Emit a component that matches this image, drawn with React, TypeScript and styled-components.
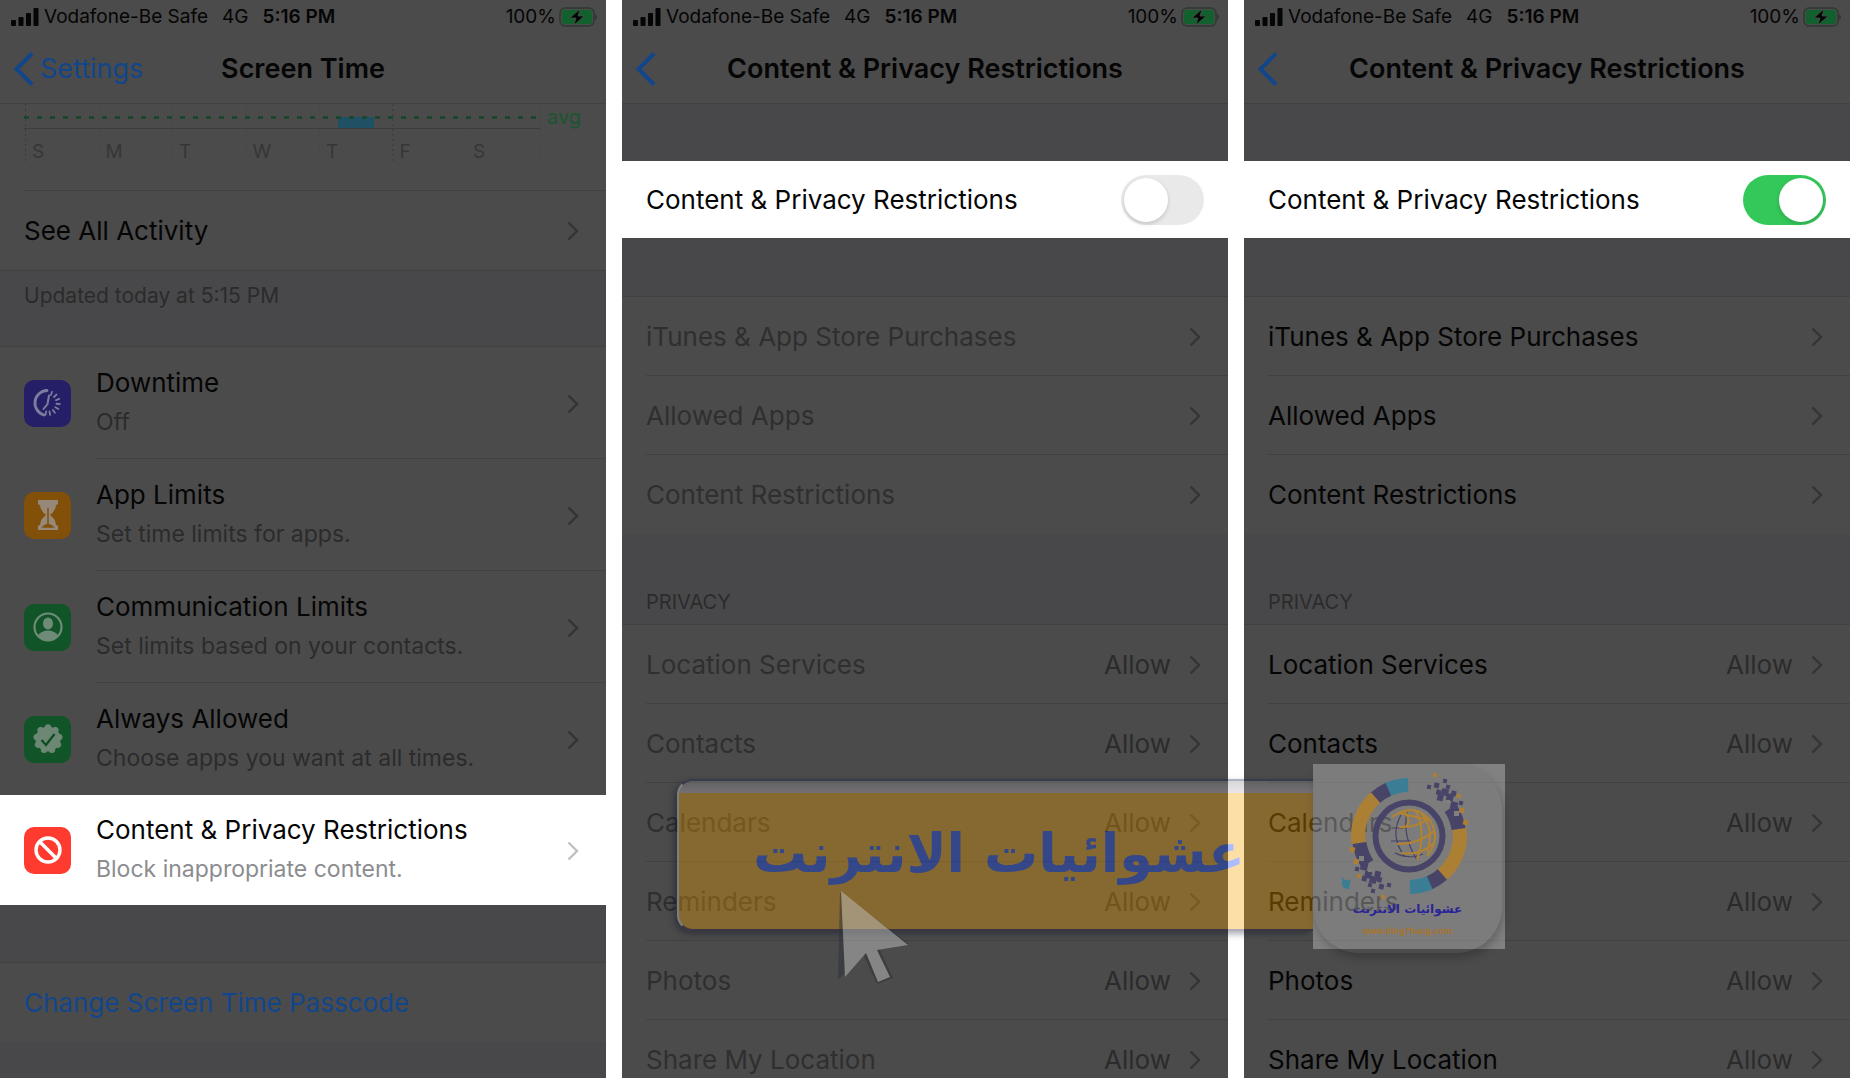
import React from "react";
import styled, { createGlobalStyle } from "styled-components";

const c = {
  sheet: "#4b4b4b",
  group: "#48484a",
  line: "#414142",
  ink: "#050505",
  muted: "#2b2b2c",
  chevron: "#343435",
  link: "#11468c",
};

const GlobalStyle = createGlobalStyle`
  *, *::before, *::after { box-sizing: border-box; }
  body {
    margin: 0;
    background: #fff;
    font-family: Inter, "Liberation Sans", sans-serif;
    color: ${c.ink};
  }
  a { color: inherit; text-decoration: none; }
  h1, h2, p { margin: 0; font-weight: 400; }
  svg { display: block; flex-shrink: 0; }
`;

const Stage = styled.main`
  position: relative;
  display: flex;
  gap: 16px;
  height: 100vh;
  overflow: hidden;
`;

const Phone = styled.section`
  flex: 1;
  min-width: 0;
  display: flex;
  flex-direction: column;
  background: ${c.group};
  & > * { flex-shrink: 0; }
`;

const Status = styled.div`
  display: flex;
  align-items: center;
  height: 34px;
  padding: 0 9px 0 11px;
  background: ${c.sheet};
  font-size: 19px;
  line-height: 24px;
  white-space: nowrap;
`;

const Carrier = styled.span`
  margin: 0 14px 0 5px;
`;

const Clock = styled.span`
  margin-left: 14px;
  font-weight: 600;
`;

const Charge = styled.span`
  margin-left: auto;
  margin-right: 3px;
`;

const Nav = styled.header`
  display: grid;
  grid-template-columns: 1fr auto 1fr;
  align-items: center;
  height: 70px;
  padding: 0 12px;
  background: ${c.sheet};
  border-bottom: 1px solid ${c.line};
  font-size: 27px;
  line-height: 32px;
`;

const Back = styled.button`
  justify-self: start;
  display: flex;
  align-items: center;
  gap: 6px;
  padding: 0;
  border: 0;
  background: none;
  color: ${c.link};
  font: inherit;
`;

const Title = styled.h1`
  font-size: 27px;
  font-weight: 600;
  white-space: nowrap;
`;

const ChartBox = styled.div`
  height: 87px;
  padding-left: 24px;
  background: ${c.sheet};
`;

const Rule = styled.div`
  border-top: 1px solid ${c.line};
`;

const Spacer = styled.div<{ $h: number }>`
  height: ${(p) => p.$h}px;
`;

const Note = styled.p`
  height: 76px;
  padding: 13px 24px;
  border-top: 1px solid ${c.line};
  color: ${c.muted};
  font-size: 21px;
  line-height: 24px;
`;

const GroupLabel = styled.h2`
  display: flex;
  align-items: flex-end;
  height: 90px;
  padding: 0 24px 9px;
  color: ${c.muted};
  font-size: 20px;
  line-height: 26px;
`;

const Group = styled.div`
  background: ${c.sheet};
  border-top: 1px solid ${c.line};
`;

const Row = styled.a<{ $plain?: boolean }>`
  display: flex;
  align-items: center;
  height: 79px;
  padding-left: 24px;
  background: ${c.sheet};
  font-size: 26px;
  line-height: 32px;
`;

const ToolRow = styled(Row)<{ $lit?: boolean }>`
  gap: 25px;
  height: ${(p) => (p.$lit ? 110 : 112)}px;
  background: ${(p) => (p.$lit ? "#fff" : c.sheet)};
`;

const RowBody = styled.span<{ $rule?: boolean }>`
  flex: 1;
  align-self: stretch;
  display: flex;
  align-items: center;
  padding: 2px 27px 0 0;
  border-bottom: 1px solid ${(p) => (p.$rule ? c.line : "transparent")};
`;

const Label = styled.span<{ $dim?: boolean; $blue?: boolean }>`
  flex: 1;
  color: ${(p) => (p.$blue ? c.link : p.$dim ? "#2f2f30" : "inherit")};
`;

const Sub = styled.span<{ $lit?: boolean }>`
  display: block;
  padding: 8px 0 4px;
  color: ${(p) => (p.$lit ? "#8c8c90" : c.muted)};
  font-size: 23px;
  line-height: 30px;
`;

const Value = styled.span`
  margin-right: 18px;
  color: ${c.muted};
`;

const Tile = styled.span<{ $bg: string }>`
  display: grid;
  place-items: center;
  width: 47px;
  height: 47px;
  border-radius: 10px;
  background: ${(p) => p.$bg};
`;

const SwitchRow = styled.label`
  display: flex;
  align-items: center;
  justify-content: space-between;
  height: 77px;
  padding: 0 24px;
  background: #fff;
  font-size: 26px;
  line-height: 32px;
`;

const Switch = styled.input`
  appearance: none;
  display: flex;
  align-items: center;
  width: 83px;
  height: 50px;
  margin: 0;
  padding: 0 3px;
  border-radius: 25px;
  background: #e9e9ea;
  &::before {
    content: "";
    width: 44px;
    height: 44px;
    border-radius: 50%;
    background: #fff;
    box-shadow: 0 2px 4px rgba(0, 0, 0, 0.16);
  }
  &:checked { background: #34c759; }
  &:checked::before { margin-left: auto; }
`;

/* Watermark laid over the three phones */
const Ribbon = styled.div`
  position: absolute;
  left: 677px;
  top: 779px;
  width: 636px;
  height: 152px;
  padding-top: 13px;
  border-top: 2px solid #0c2050;
  border-left: 2px solid #dce6f0;
  border-bottom: 2px solid #201030;
  border-radius: 16px 0 0 16px;
  background: linear-gradient(#8a8a90, #c8b8c0 12px, #f9a100 12px);
  box-shadow: -3px 3px 6px #000820;
  opacity: 0.34;
`;

const RibbonText = styled.p`
  padding-right: 68px;
  color: #0a40ff;
  font-family: "DejaVu Sans", sans-serif;
  font-size: 54px;
  font-weight: 700;
  line-height: 120px;
  text-align: right;
  direction: ltr;
  white-space: nowrap;
`;

const Pointer = styled.svg`
  position: absolute;
  left: 832px;
  top: 886px;
  opacity: 0.48;
`;

const Badge = styled.div`
  position: absolute;
  left: 1313px;
  top: 764px;
  width: 192px;
  height: 185px;
  background: rgba(205, 205, 205, 0.42);
`;

const BadgeCard = styled.div`
  display: flex;
  flex-direction: column;
  align-items: center;
  width: 189px;
  height: 189px;
  border-radius: 8px 46px 46px 46px;
  background: rgba(90, 90, 90, 0.1);
  box-shadow: 2px 5px 9px rgba(0, 0, 0, 0.22);
`;

const BadgeName = styled.p`
  color: #2a2596;
  font-family: "DejaVu Sans", sans-serif;
  font-size: 12px;
  font-weight: 700;
  line-height: 18px;
`;

const BadgeUrl = styled.p`
  color: #a8742a;
  font-family: "Liberation Sans Narrow", "Liberation Sans", sans-serif;
  font-size: 9px;
  font-weight: 700;
  line-height: 26px;
`;

const Chevron = ({ lit = false }: { lit?: boolean }) => (
  <svg width="12" height="20" viewBox="0 0 12 20" fill="none" aria-hidden="true">
    <path d="M1.5 1.5 10 10l-8.500 8.500" stroke={lit ? "#c0c0c3" : c.chevron} strokeWidth="2.400" />
  </svg>
);

const StatusBar = () => (
  <Status>
    <svg width="28" height="18" viewBox="0 0 28 18" fill={c.ink} aria-hidden="true">
      <rect y="12" width="5" height="6" rx="1" />
      <rect x="7.500" y="9" width="5" height="9" rx="1" />
      <rect x="15" y="5" width="5" height="13" rx="1" />
      <rect x="22.500" width="5" height="18" rx="1" />
    </svg>
    <Carrier>Vodafone-Be Safe</Carrier>
    <span>4G</span>
    <Clock>5:16 PM</Clock>
    <Charge>100%</Charge>
    <svg width="38" height="20" viewBox="0 0 38 20" aria-hidden="true">
      <rect x="1" y="1" width="34" height="18" rx="5" fill="none" stroke="#2d3a31" strokeWidth="1.500" />
      <rect x="3" y="3" width="30" height="14" rx="3" fill="#12602d" />
      <path d="M36 7v6q2-1 2-3t-2-3z" fill="#2d3a31" />
      <path d="M21 2 11 11h6l-2 7 10-9h-6z" fill="#020202" stroke="#4b4b4b" strokeWidth=".8" />
    </svg>
  </Status>
);

const NavBar = ({ title, back }: { title: string; back?: string }) => (
  <Nav>
    <Back aria-label={back ?? "Back"}>
      <svg width="22" height="36" viewBox="0 0 22 36" fill="none" aria-hidden="true">
        <path d="M20 2.500 4.500 18 20 33.500" stroke={c.link} strokeWidth="4" />
      </svg>
      {back}
    </Back>
    <Title>{title}</Title>
  </Nav>
);

const days = ["S", "M", "T", "W", "T", "F", "S"];

const WeekChart = () => (
  <ChartBox>
    <svg width="570" height="86" viewBox="0 0 570 86" aria-hidden="true">
      {[0, 1, 2, 3, 4, 5, 6, 7].map((i) => (
        <path
          key={i}
          d={`M${1.5 + i * 73.500} 0V60`}
          stroke={i === 0 || i === 5 ? "#3b3b3c" : "#464647"}
          strokeDasharray="2 3"
        />
      ))}
      <path d="M0 24.500H516" stroke="#3c3c3d" />
      <rect x="314" y="13" width="36" height="11" fill="#1f5063" />
      <path d="M0 13.500H512" stroke="#14472a" strokeWidth="2.500" strokeDasharray="5 8" />
      {days.map((d, i) => (
        <text key={i} x={8 + i * 73.500} y="54" fontSize="19" fill="#363637">
          {d}
        </text>
      ))}
      <text x="523" y="20" fontSize="20" fill="#1a552f">
        avg
      </text>
    </svg>
    <Rule />
  </ChartBox>
);

const DowntimeIcon = () => (
  <svg width="32" height="32" viewBox="0 0 32 32" fill="none" stroke="#7d7da0" strokeLinecap="round">
    <path d="M15 3.500A12.500 12.500 0 0 0 12 28" strokeWidth="2.800" />
    <path d="M17 8.500 15.500 17l-4 5" strokeWidth="2" />
    {[-70, -45, -20, 5, 30, 55, 80, 102].map((a) => (
      <path key={a} d="M24.500 16h3.500" strokeWidth="1.800" transform={`rotate(${a} 16 16)`} />
    ))}
  </svg>
);

const HourglassIcon = () => (
  <svg width="24" height="34" viewBox="0 0 24 34">
    <path
      d="M2 2h20v4q-1 1-2 1-.500 6-6 10 5.500 4 6 10 1 0 2 1v4H2v-4q1-1 2-1 .500-6 6-10-5.500-4-6-10-1 0-2-1z"
      fill="#96897a"
    />
    <path d="M12 10v16M7 29q5-5 10 0z" stroke="#825008" strokeWidth="1.500" fill="#825008" />
  </svg>
);

const PersonIcon = () => (
  <svg width="32" height="32" viewBox="0 0 32 32">
    <circle cx="16" cy="16" r="13.500" fill="none" stroke="#6f8b77" strokeWidth="2.200" />
    <ellipse cx="16" cy="12.500" rx="5" ry="6" fill="#6f8b77" />
    <path d="M6 24q4-4.500 10-4.500T26 24q-4 5.500-10 5.500T6 24z" fill="#6f8b77" />
  </svg>
);

const SealIcon = () => (
  <svg width="32" height="32" viewBox="0 0 32 32">
    <g fill="#6c8773">
      <circle cx="16" cy="16" r="12.500" />
      {[0, 40, 80, 120, 160, 200, 240, 280, 320].map((a) => (
        <circle key={a} cx="16" cy="4.500" r="3.200" transform={`rotate(${a} 16 16)`} />
      ))}
    </g>
    <path d="m9.500 17 4.500 5 8.500-11" fill="none" stroke="#0d4d20" strokeWidth="2.200" />
  </svg>
);

const BlockIcon = () => (
  <svg width="32" height="32" viewBox="0 0 32 32" fill="none" stroke="#fff" strokeWidth="3.400">
    <circle cx="16" cy="16" r="12" />
    <path d="m7.500 7.500 17 17" />
  </svg>
);

const tools = [
  { name: "Downtime", sub: "Off", bg: "#241f66", icon: <DowntimeIcon /> },
  { name: "App Limits", sub: "Set time limits for apps.", bg: "#825008", icon: <HourglassIcon /> },
  { name: "Communication Limits", sub: "Set limits based on your contacts.", bg: "#105427", icon: <PersonIcon /> },
  { name: "Always Allowed", sub: "Choose apps you want at all times.", bg: "#105427", icon: <SealIcon /> },
  { name: "Content & Privacy Restrictions", sub: "Block inappropriate content.", bg: "#ff3b30", icon: <BlockIcon />, lit: true },
];

const ScreenTime = () => (
  <Phone>
    <StatusBar />
    <NavBar title="Screen Time" back="Settings" />
    <WeekChart />
    <Row href="#activity">
      <RowBody>
        <Label>See All Activity</Label>
        <Chevron />
      </RowBody>
    </Row>
    <Note>Updated today at 5:15 PM</Note>
    <Group>
      {tools.map((t, i) => (
        <ToolRow key={t.name} href={`#tool-${i}`} $lit={t.lit}>
          <Tile $bg={t.bg}>{t.icon}</Tile>
          <RowBody $rule={i < 3}>
            <Label>
              {t.name}
              <Sub $lit={t.lit}>{t.sub}</Sub>
            </Label>
            <Chevron lit={t.lit} />
          </RowBody>
        </ToolRow>
      ))}
    </Group>
    <Spacer $h={57} />
    <Group>
      <Row href="#passcode">
        <RowBody>
          <Label $blue>Change Screen Time Passcode</Label>
        </RowBody>
      </Row>
    </Group>
  </Phone>
);

const content = ["iTunes & App Store Purchases", "Allowed Apps", "Content Restrictions"];
const privacy = ["Location Services", "Contacts", "Calendars", "Reminders", "Photos", "Share My Location"];

const Restrictions = ({ on }: { on: boolean }) => (
  <Phone>
    <StatusBar />
    <NavBar title="Content & Privacy Restrictions" />
    <Spacer $h={57} />
    <SwitchRow>
      Content &amp; Privacy Restrictions
      <Switch type="checkbox" role="switch" defaultChecked={on} />
    </SwitchRow>
    <Spacer $h={58} />
    <Group>
      {content.map((name, i) => (
        <Row key={name} href={`#content-${i}`}>
          <RowBody $rule={i < 2}>
            <Label $dim={!on}>{name}</Label>
            <Chevron />
          </RowBody>
        </Row>
      ))}
    </Group>
    <GroupLabel>PRIVACY</GroupLabel>
    <Group>
      {privacy.map((name, i) => (
        <Row key={name} href={`#privacy-${i}`}>
          <RowBody $rule>
            <Label $dim={!on}>{name}</Label>
            <Value>Allow</Value>
            <Chevron />
          </RowBody>
        </Row>
      ))}
    </Group>
  </Phone>
);

const arc = (from: number, to: number, r: number) => {
  const at = (deg: number) => {
    const a = (deg * Math.PI) / 180;
    return `${(r * Math.cos(a)).toFixed(2)} ${(r * Math.sin(a)).toFixed(2)}`;
  };
  return `M${at(from)}A${r} ${r} 0 0 1 ${at(to)}`;
};

/* x, y, size, gold? */
const pixels = [
  [-46, 29, 7, 0], [-42, 37, 7, 0], [-37, 42, 7, 0], [-45, 42, 5, 0], [-52, 33, 4, 0],
  [-53, 25, 5, 1], [-57, 13, 5, 1], [-50, 40, 4, 1], [-32, 37, 6, 0], [-30, 43, 5, 0],
  [-39, 49, 4, 0], [-36, 55, 4, 0], [-28, 50, 5, 0], [-20, 49, 4, 0], [-26, 61, 4, 1],
];

const Half = () => (
  <g>
    <g fill="none" strokeWidth="14">
      <path d={arc(244, 269, 51)} stroke="#3a7d94" />
      <path d={arc(228, 246, 51)} stroke="#474468" />
      <path d={arc(172, 229, 51)} stroke="#ac8034" />
      <path d={arc(146, 172, 50)} stroke="#474468" />
    </g>
    {pixels.map(([x, y, s, gold]) => (
      <rect key={`${x},${y}`} x={x - 2} y={y - 2} width={s} height={s} fill={gold ? "#ac8034" : "#474468"} transform={`rotate(15 ${x} ${y})`} />
    ))}
    <rect x="-50" y="20" width="5" height="5" fill="#808080" />
    <rect x="-41" y="33" width="3" height="3" fill="#808080" />
  </g>
);

const GlobeLogo = () => (
  <svg width="150" height="136" viewBox="-76 -72 150 136" aria-hidden="true">
    <Half />
    <g transform="rotate(180)">
      <Half />
    </g>
    <circle r="33.500" fill="none" stroke="#474468" strokeWidth="6" />
    <g fill="none" stroke="#474468" strokeWidth="1.200">
      <path d="M-8-21Q-20 0-4 21M-17-8h14M-18 5h20M-14 17Q0 24 14 18M-2-24Q-7 0 8 24" />
    </g>
    <g fill="none" stroke="#b5832d" strokeWidth="2">
      <path d="M-17-19Q4-34 20-17 33 2 18 20M-9-23Q14-17 22-16M-10-9Q8-8 20-18M-12 8Q10 8 25-5M-4-24Q4-12-6-8M6-26Q18-6 8 24M-8 17Q10 20 24 8M12-23Q26-8 18 16" />
    </g>
    <path d="M-67 41q5 6 9 2l-2 10q-6 0-7-4z" fill="#3a7d94" />
  </svg>
);

export default function App() {
  return (
    <>
      <GlobalStyle />
      <Stage>
        <ScreenTime />
        <Restrictions on={false} />
        <Restrictions on />
        <Ribbon>
          <RibbonText lang="ar">عشوائيات الانترنت</RibbonText>
        </Ribbon>
        <Pointer width="82" height="104" viewBox="0 0 82 104" aria-hidden="true">
          <path d="M8 6 6 94 31 68l14 30 16-6-14-30 30-4z" fill="#2a3038" />
          <path d="m9 5 4 86 21-24 12 29 12-5-13-27 31-5z" fill="#c4c4c4" />
        </Pointer>
        <Badge>
          <BadgeCard>
            <GlobeLogo />
            <BadgeName lang="ar" dir="rtl">عشوائيات الانترنت</BadgeName>
            <BadgeUrl>www.blog7haug.com</BadgeUrl>
          </BadgeCard>
        </Badge>
      </Stage>
    </>
  );
}
